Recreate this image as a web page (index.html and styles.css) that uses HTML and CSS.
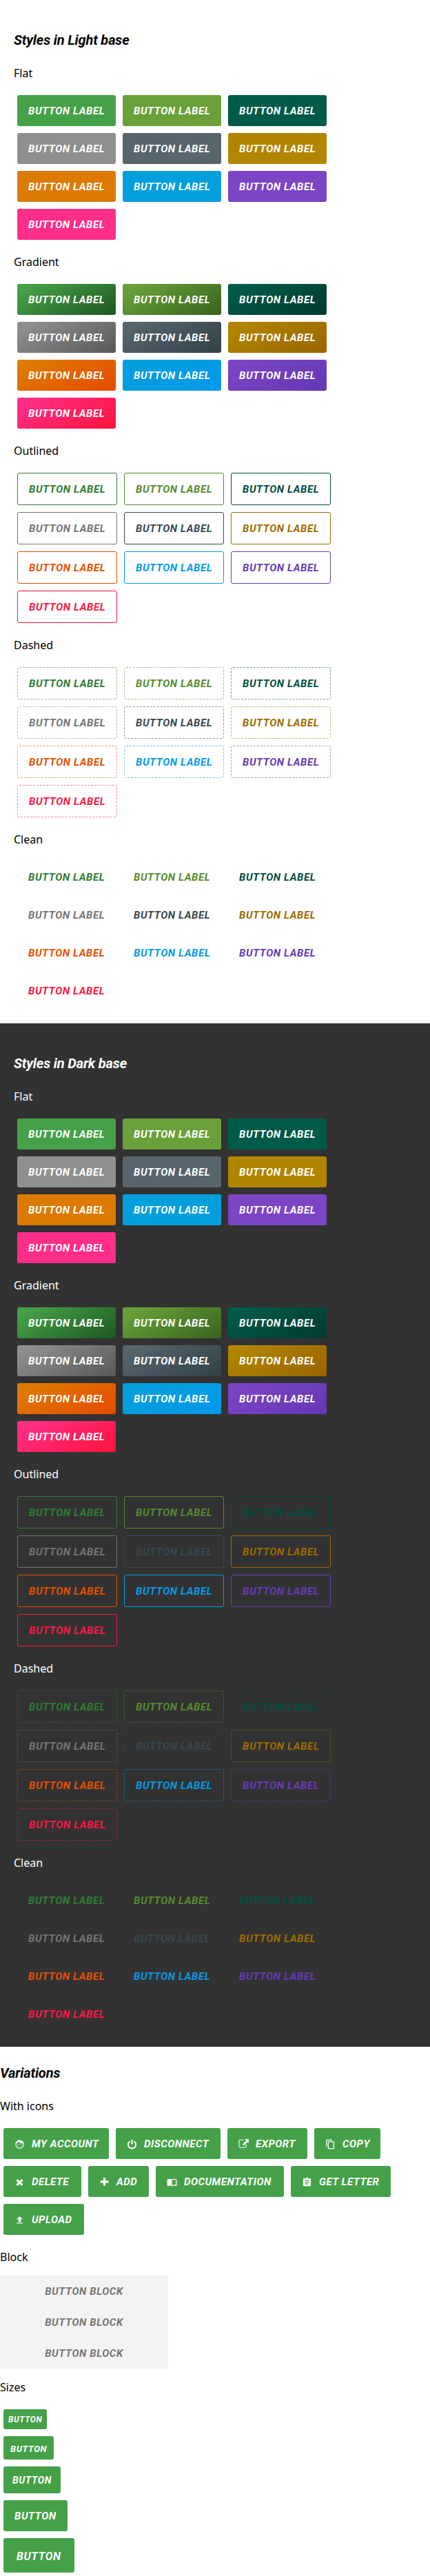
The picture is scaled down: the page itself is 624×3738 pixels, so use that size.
FILE: index.html
```html
<!DOCTYPE html>
<html lang="en">
<head>
<meta charset="utf-8">
<title>Buttons</title>
<link rel="stylesheet" href="styles.css">
</head>
<body>
<section class="base base-light">
<h2>Styles in Light base</h2>
<p>Flat</p>
<div class="group flat">
<button class="btn green">Button label</button><button class="btn lime">Button label</button><button class="btn teal">Button label</button><button class="btn gray">Button label</button><button class="btn slate">Button label</button><button class="btn gold">Button label</button><button class="btn orange">Button label</button><button class="btn blue">Button label</button><button class="btn purple">Button label</button><button class="btn pink">Button label</button>
</div>
<p>Gradient</p>
<div class="group gradient">
<button class="btn green">Button label</button><button class="btn lime">Button label</button><button class="btn teal">Button label</button><button class="btn gray">Button label</button><button class="btn slate">Button label</button><button class="btn gold">Button label</button><button class="btn orange">Button label</button><button class="btn blue">Button label</button><button class="btn purple">Button label</button><button class="btn pink">Button label</button>
</div>
<p>Outlined</p>
<div class="group outlined">
<button class="btn green">Button label</button><button class="btn lime">Button label</button><button class="btn teal">Button label</button><button class="btn gray">Button label</button><button class="btn slate">Button label</button><button class="btn gold">Button label</button><button class="btn orange">Button label</button><button class="btn blue">Button label</button><button class="btn purple">Button label</button><button class="btn pink">Button label</button>
</div>
<p>Dashed</p>
<div class="group dashed">
<button class="btn green">Button label</button><button class="btn lime">Button label</button><button class="btn teal">Button label</button><button class="btn gray">Button label</button><button class="btn slate">Button label</button><button class="btn gold">Button label</button><button class="btn orange">Button label</button><button class="btn blue">Button label</button><button class="btn purple">Button label</button><button class="btn pink">Button label</button>
</div>
<p>Clean</p>
<div class="group clean">
<button class="btn green">Button label</button><button class="btn lime">Button label</button><button class="btn teal">Button label</button><button class="btn gray">Button label</button><button class="btn slate">Button label</button><button class="btn gold">Button label</button><button class="btn orange">Button label</button><button class="btn blue">Button label</button><button class="btn purple">Button label</button><button class="btn pink">Button label</button>
</div>
</section>
<section class="base base-dark">
<h2>Styles in Dark base</h2>
<p>Flat</p>
<div class="group flat">
<button class="btn green">Button label</button><button class="btn lime">Button label</button><button class="btn teal">Button label</button><button class="btn gray">Button label</button><button class="btn slate">Button label</button><button class="btn gold">Button label</button><button class="btn orange">Button label</button><button class="btn blue">Button label</button><button class="btn purple">Button label</button><button class="btn pink">Button label</button>
</div>
<p>Gradient</p>
<div class="group gradient">
<button class="btn green">Button label</button><button class="btn lime">Button label</button><button class="btn teal">Button label</button><button class="btn gray">Button label</button><button class="btn slate">Button label</button><button class="btn gold">Button label</button><button class="btn orange">Button label</button><button class="btn blue">Button label</button><button class="btn purple">Button label</button><button class="btn pink">Button label</button>
</div>
<p>Outlined</p>
<div class="group outlined">
<button class="btn green">Button label</button><button class="btn lime">Button label</button><button class="btn teal">Button label</button><button class="btn gray">Button label</button><button class="btn slate">Button label</button><button class="btn gold">Button label</button><button class="btn orange">Button label</button><button class="btn blue">Button label</button><button class="btn purple">Button label</button><button class="btn pink">Button label</button>
</div>
<p>Dashed</p>
<div class="group dashed">
<button class="btn green">Button label</button><button class="btn lime">Button label</button><button class="btn teal">Button label</button><button class="btn gray">Button label</button><button class="btn slate">Button label</button><button class="btn gold">Button label</button><button class="btn orange">Button label</button><button class="btn blue">Button label</button><button class="btn purple">Button label</button><button class="btn pink">Button label</button>
</div>
<p>Clean</p>
<div class="group clean">
<button class="btn green">Button label</button><button class="btn lime">Button label</button><button class="btn teal">Button label</button><button class="btn gray">Button label</button><button class="btn slate">Button label</button><button class="btn gold">Button label</button><button class="btn orange">Button label</button><button class="btn blue">Button label</button><button class="btn purple">Button label</button><button class="btn pink">Button label</button>
</div>
</section>
<section class="variations">
<h2>Variations</h2>
<p>With icons</p>
<div class="group flat icons">
<button class="btn green account"><svg viewBox="0 0 24 24"><path d="M9 11.75a1.25 1.25 0 1 0 0 2.5 1.25 1.25 0 0 0 0-2.5zm6 0a1.25 1.25 0 1 0 0 2.5 1.25 1.25 0 0 0 0-2.5zM12 2a10 10 0 1 0 0 20 10 10 0 0 0 0-20zm0 18c-4.41 0-8-3.59-8-8 0-.29.02-.58.05-.86 2.36-1.05 4.23-2.98 5.21-5.37a9.97 9.97 0 0 0 10.41 3.97c.21.71.33 1.47.33 2.26 0 4.41-3.59 8-8 8z"/></svg>My account</button>
<button class="btn green disconnect"><svg viewBox="0 0 24 24"><path d="M7 5.2A9 9 0 1 0 17 5.200M12 1v11" fill="none" stroke="currentColor" stroke-width="3.3"/></svg>Disconnect</button>
<button class="btn green export"><svg viewBox="0 0 24 24"><path d="M12 2H4.500Q1.500 2 1.500 5V16.500Q1.500 19.500 4.500 19.500H15Q18 19.500 18 16.500V12" fill="none" stroke="currentColor" stroke-width="1.800"/><path d="M14.500 0H24V9.500L21 6.500L12.500 15L9.500 12L18 3.500Z"/></svg>Export</button>
<button class="btn green copy"><svg viewBox="0 0 24 24"><path d="M16 1H4a2 2 0 0 0-2 2v14h2V3h12V1zm3 4H8a2 2 0 0 0-2 2v14c0 1.100.9 2 2 2h11a2 2 0 0 0 2-2V7a2 2 0 0 0-2-2zm0 16H8V7h11v14z"/></svg>Copy</button>
<button class="btn green delete"><svg viewBox="0 0 24 24"><path d="M5.500 6.500L18.500 19M18.500 6.500L5.500 19" fill="none" stroke="currentColor" stroke-width="5"/></svg>Delete</button>
<button class="btn green add"><svg viewBox="0 0 24 24"><path d="M12 1.500V20.500M2.500 11H21.500" fill="none" stroke="currentColor" stroke-width="5" stroke-linejoin="round"/></svg>Add</button>
<button class="btn green docs"><svg viewBox="0 0 24 24"><path d="M21 5c-1.110-.35-2.330-.5-3.500-.5-1.950 0-4.050.4-5.500 1.500-1.450-1.100-3.550-1.500-5.500-1.500S2.450 4.900 1 6v14.650c0 .25.25.5.5.5.1 0 .15-.05.25-.05C3.100 20.450 5.050 20 6.500 20c1.950 0 4.050.4 5.500 1.500 1.350-.85 3.800-1.500 5.500-1.500 1.650 0 3.350.3 4.750 1.050.1.050.15.050.25.050.25 0 .5-.25.5-.5V6c-.6-.45-1.250-.75-2-1zm0 13.500c-1.100-.35-2.300-.5-3.500-.5-1.700 0-4.150.65-5.500 1.500V8c1.350-.85 3.800-1.500 5.500-1.500 1.200 0 2.400.15 3.500.5v11.500z"/></svg>Documentation</button>
<button class="btn green letter"><svg viewBox="0 0 24 24"><path d="M19 3h-4.180a3 3 0 0 0-5.640 0H5a2 2 0 0 0-2 2v14c0 1.100.9 2 2 2h14a2 2 0 0 0 2-2V5a2 2 0 0 0-2-2zm-7 0a1 1 0 1 1 0 2 1 1 0 0 1 0-2zm2 14H7v-2h7v2zm3-4H7v-2h10v2zm0-4H7V7h10v2z"/></svg>Get letter</button>
<button class="btn green upload"><svg viewBox="0 0 24 24"><path d="M9 16h6v-6h4l-7-7-7 7h4zm-4 2h14v2H5z"/></svg>Upload</button>
</div>
<p>Block</p>
<div class="blocks"><button class="btn block">Button block</button><button class="btn block">Button block</button><button class="btn block">Button block</button></div>
<p>Sizes</p>
<div class="group flat sizes">
<button class="btn green xs">Button</button>
<button class="btn green sm">Button</button>
<button class="btn green md">Button</button>
<button class="btn green lg">Button</button>
<button class="btn green xl">Button</button>
</div>
</section>
</body>
</html>
```
FILE: styles.css
```css
* { box-sizing: border-box; }
body { margin: 0; background: #fff; color: #000; font: 16px/22px "Noto Sans", sans-serif; }
.base { padding: 42px 20px 20px; }
.base-dark { background: #323232; color: #fff; }
.variations { padding-top: 22px; }
h2 { margin: 0 0 21px; font: italic bold 20px/32px Roboto, sans-serif; letter-spacing: -0.15px; }
p { margin: 0; padding: 16px 0; }
h2 + p { padding-top: 0; }

.group { display: flex; flex-wrap: wrap; }
.btn {
  display: flex; align-items: center; justify-content: flex-start;
  width: 143px; height: 45px; margin: 5px; padding: 2px 0 0 16px;
  border: 0; border-radius: 3px; background: none; color: #fff;
  font: italic bold 15px/15px Roboto, sans-serif; letter-spacing: 0.6px;
  text-transform: uppercase; white-space: nowrap;
}

.green { --from: #45a148; --to: #1f5a23; --ink: #2e7d32; }
.lime { --from: #6aa039; --to: #38661e; --ink: #558b2f; }
.teal { --from: #005a4a; --to: #003c30; --ink: #004d40; }
.gray { --from: #8f8f8f; --to: #5a5a5a; --ink: #757575; }
.slate { --from: #57656d; --to: #324249; --ink: #37474f; }
.gold { --from: #b28500; --to: #9a6500; --ink: #9e6c00; }
.orange { --from: #dc7b00; --to: #e84b00; --ink: #e65100; }
.blue { --from: #039fdc; --to: #0399e9; --ink: #039be5; }
.purple { --from: #7b45c4; --to: #6438b4; --ink: #673ab7; }
.pink { --from: #ff2e88; --to: #ff143c; --ink: #ff1744; }

.flat .btn { background: var(--from); }
.gradient .btn { background: linear-gradient(150deg, var(--from) 10%, var(--to) 97%); }
.outlined .btn, .dashed .btn { width: 145px; height: 47px; border: 1px solid var(--ink); color: var(--ink); }
.dashed .btn { border: 1px dashed color-mix(in srgb, var(--ink) 55%, transparent); }
.clean .btn { color: var(--ink); }

.icons svg { flex: none; width: 15px; height: 15px; margin-right: 10px; fill: currentColor; }
.icons .btn { letter-spacing: 0.5px; }
.icons .account { width: 153px; }
.icons .disconnect { width: 152px; }
.icons .export { width: 116px; }
.icons .copy { width: 96px; }
.icons .delete { width: 113px; }
.icons .add { width: 88px; }
.icons .docs { width: 186px; }
.icons .letter { width: 145px; }
.icons .upload { width: 117px; }

.blocks { width: 244px; background: #f3f3f3; }
.blocks .btn { width: 100%; margin: 0; padding: 2px 0 0; justify-content: center; border-radius: 0; color: #757575; }
p:has(+ .blocks) { padding-bottom: 11px; }
.blocks { margin-top: 5px; }

.sizes { flex-direction: column; }
.sizes .xs { width: 63px; height: 29px; padding-left: 7px; font-size: 12px; }
.sizes .sm { width: 73px; height: 34px; padding-left: 10px; font-size: 13px; }
.sizes .md { width: 83px; height: 39px; padding-left: 13px; font-size: 14px; }
.sizes .lg { width: 93px; padding-left: 16px; }
.sizes .xl { width: 103px; height: 50px; padding-left: 19px; font-size: 16px; }
```
